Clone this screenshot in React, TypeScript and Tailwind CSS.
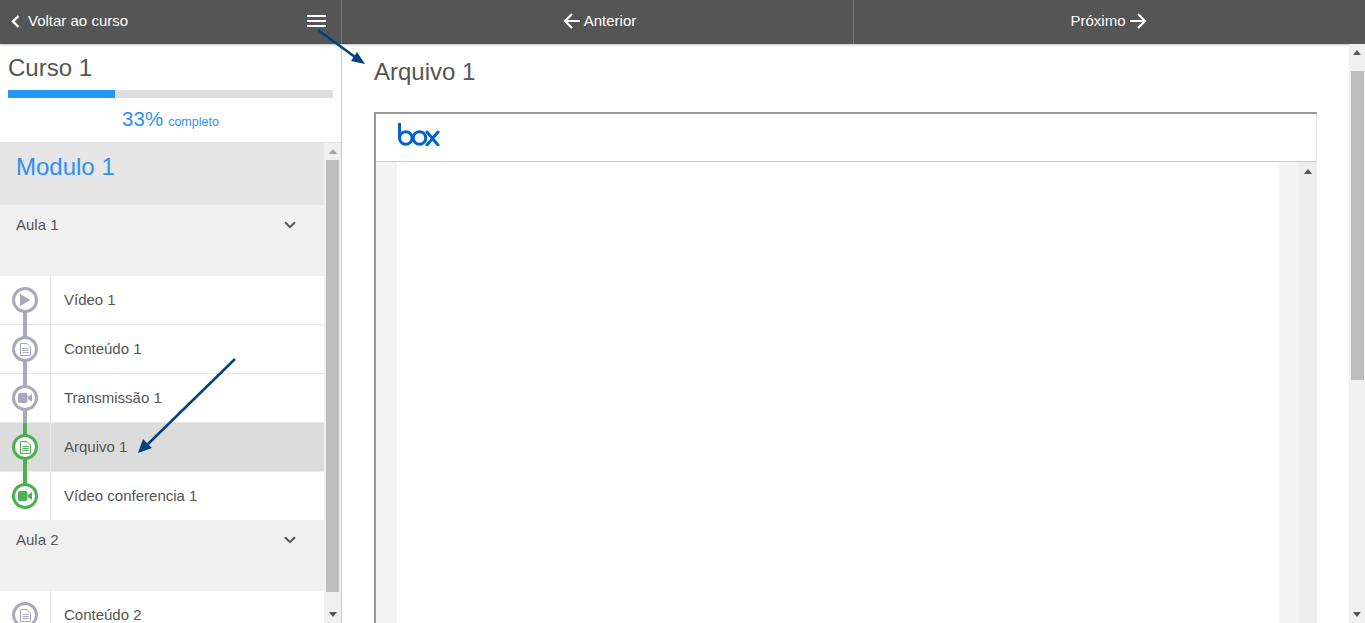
import React from "react";

const Arrow = ({ dir }: { dir: "left" | "right" }) => (
  <svg width="18" height="16" viewBox="0 0 18 16" fill="none" stroke="#fff" strokeWidth="2.2" className="shrink-0">
    {dir === "left" ? <path d="M17 8H2M9 1L2 8l7 7" /> : <path d="M1 8h15M9 1l7 7-7 7" />}
  </svg>
);

const Tri = ({ up, color = "#555" }: { up: boolean; color?: string }) => (
  <svg width="8" height="5" viewBox="0 0 8 5" fill={color}>
    {up ? <path d="M4 0l4 5H0z" /> : <path d="M0 0h8L4 5z" />}
  </svg>
);

const Chevron = () => (
  <svg width="12" height="8" viewBox="0 0 12 8" fill="none" stroke="#555" strokeWidth="2">
    <path d="M1 1.2l5 5 5-5" />
  </svg>
);

const Icon = ({ kind, color }: { kind: string; color: string }) => {
  if (kind === "play")
    return (
      <svg width="12" height="12" viewBox="0 0 12 12" fill={color}>
        <path d="M1 0l10.5 6L1 12z" />
      </svg>
    );
  if (kind === "video")
    return (
      <svg width="14" height="10" viewBox="0 0 14 10" fill={color}>
        <rect x="0" y="0" width="9.5" height="10" rx="2" />
        <path d="M10 4l4-3v8l-4-3z" />
      </svg>
    );
  return (
    <svg width="11" height="13" viewBox="0 0 11 13" fill="none" stroke={color} strokeWidth="1">
      <path d="M.5.5h6.5l3.500 3.500v8.500h-10z" />
      <path d="M2.500 5.500h6M2.500 7.500h6M2.500 9.500h6" />
    </svg>
  );
};

const GRAY = "#a9a9bd";
const GREEN = "#4caf50";

type RowProps = {
  label: string;
  kind: string;
  circle: string;
  top?: string;
  bottom?: string;
  active?: boolean;
  last?: boolean;
};

const Row = ({ label, kind, circle, top, bottom, active, last }: RowProps) => (
  <div className={`flex shrink-0 ${active ? "bg-[#dcdcdc]" : "bg-white"} ${last ? "h-[48px]" : "h-[49px] border-b border-[#e8e8e8]"}`}>
    <div className="relative flex h-full w-[51px] shrink-0 items-center justify-center border-r border-[#e8e8e8]">
      {top && <div className="absolute left-[23px] top-0 h-1/2 w-1" style={{ backgroundColor: top }} />}
      {bottom && <div className="absolute left-[23px] bottom-[-1px] h-1/2 w-1" style={{ backgroundColor: bottom }} />}
      <div
        className="relative flex h-[26px] w-[26px] items-center justify-center rounded-full border-[3px] bg-white"
        style={{ borderColor: circle }}
      >
        <Icon kind={kind} color={circle} />
      </div>
    </div>
    <div className="flex items-center pl-[13px] text-[15px] text-[#555]">{label}</div>
  </div>
);

const Aula = ({ label }: { label: string }) => (
  <div className="flex h-[71px] shrink-0 items-start justify-between bg-[#f0f0f0] pl-4 pr-[28px] pt-[9px] text-[15px] text-[#555]">
    <span>{label}</span>
    <span className="mt-[7px] flex"><Chevron /></span>
  </div>
);

export default function App() {
  return (
    <div className="relative flex h-[623px] w-[1365px] flex-col overflow-hidden bg-white font-['Liberation_Sans',Arial,sans-serif] text-[#555]">
      <header className="flex h-11 shrink-0 bg-[#555] text-white shadow-[0_1px_2px_rgba(0,0,0,0.25)]">
        <div className="flex w-[342px] shrink-0 items-center justify-between border-r border-[#777] pb-[2px] pl-[11px] pr-[15px]">
          <div className="flex items-center gap-[8px] text-[15px]">
            <svg width="9" height="13" viewBox="0 0 9 13" fill="none" stroke="#fff" strokeWidth="2.400">
              <path d="M7.500 1L2 6.500l5.500 5.500" />
            </svg>
            Voltar ao curso
          </div>
          <div className="flex w-[19px] flex-col gap-[3px]">
            <div className="h-[2px] bg-white" />
            <div className="h-[2px] bg-white" />
            <div className="h-[2px] bg-white" />
          </div>
        </div>
        <div className="flex w-[512px] shrink-0 items-center justify-center gap-[3px] border-r border-[#777] pb-[2px] pl-[4px] text-[15px]">
          <Arrow dir="left" />
          Anterior
        </div>
        <div className="flex flex-1 items-center justify-center gap-[3px] pb-[2px] pr-[2px] text-[15px]">
          Próximo
          <Arrow dir="right" />
        </div>
      </header>

      <div className="flex min-h-0 flex-1">
        <aside className="flex w-[342px] shrink-0 flex-col border-r border-[#ccc]">
          <div className="h-[99px] shrink-0 border-b border-[#e0e0e0] pl-2 pr-2">
            <div className="pt-[8px] text-[24px] leading-[32px]">Curso 1</div>
            <div className="mt-[6px] h-2 w-[325px] bg-[#ddd]">
              <div className="h-2 w-[107px] bg-[#2196f3]" />
            </div>
            <div className="mt-[7px] flex items-baseline justify-center gap-[5px] text-[#2f8ff0]">
              <span className="text-[20.500px] leading-[27px]">33%</span>
              <span className="text-[12.500px]">completo</span>
            </div>
          </div>
          <div className="flex min-h-0 flex-1">
            <div className="flex w-[324px] shrink-0 flex-col overflow-hidden">
              <div className="h-[62px] shrink-0 bg-[#e6e6e6] pl-4 pt-[8px] text-[24px] leading-[32px] text-[#2f8ff0]">Modulo 1</div>
              <Aula label="Aula 1" />
              <Row label="Vídeo 1" kind="play" circle={GRAY} bottom={GRAY} />
              <Row label="Conteúdo 1" kind="file" circle={GRAY} top={GRAY} bottom={GRAY} />
              <Row label="Transmissão 1" kind="video" circle={GRAY} top={GRAY} bottom={GRAY} />
              <Row label="Arquivo 1" kind="file" circle={GREEN} top={GREEN} bottom={GREEN} active />
              <Row label="Vídeo conferencia 1" kind="video" circle={GREEN} top={GREEN} last />
              <Aula label="Aula 2" />
              <Row label="Conteúdo 2" kind="file" circle={GRAY} />
            </div>
            <div className="flex w-[17px] shrink-0 flex-col items-center bg-[#f0f0f0]">
              <div className="flex h-[17px] items-center justify-center"><Tri up color="#a3a3a3" /></div>
              <div className="h-[432px] w-[13px] bg-[#bdbdbd]" />
              <div className="mt-auto flex h-[17px] items-center justify-center"><Tri up={false} /></div>
            </div>
          </div>
        </aside>

        <main className="flex min-w-0 flex-1">
          <div className="flex min-w-0 flex-1 flex-col pl-[32px] pr-[32px]">
            <h1 className="mt-[12px] h-[56px] shrink-0 text-[24px] font-normal leading-[32px]">Arquivo 1</h1>
            <div className="flex min-h-0 flex-1 flex-col border-l-2 border-t-2 border-[#999]">
              <div className="flex h-[48px] shrink-0 items-start border-b border-r border-b-[#ccc] border-r-[#e5e5e5] pl-[22px] pt-[9px]">
                <svg width="43" height="23" viewBox="0 0 43 23" fill="none" stroke="#0061d5" strokeWidth="3">
                  <path d="M1.500 0v15" />
                  <circle cx="7.800" cy="15" r="6.300" />
                  <circle cx="21.500" cy="15" r="6.300" />
                  <path d="M29 9l11 13M40 9L29 22" strokeLinecap="round" />
                </svg>
              </div>
              <div className="flex min-h-0 flex-1">
                <div className="w-[21px] shrink-0 bg-[#f3f3f3]" />
                <div className="flex-1 bg-white" />
                <div className="w-[20px] shrink-0 bg-[#f3f3f3]" />
                <div className="flex w-[18px] shrink-0 flex-col items-center bg-[#eee] pt-[7px]">
                  <Tri up />
                </div>
              </div>
            </div>
          </div>
          <div className="flex w-4 shrink-0 flex-col items-center bg-[#f0f0f0]">
            <div className="flex h-[27px] shrink-0 items-start justify-center pt-[6px]"><Tri up /></div>
            <div className="ml-[1px] h-[309px] w-[13px] bg-[#bdbdbd]" />
            <div className="mt-auto flex h-[17px] items-center justify-center"><Tri up={false} /></div>
          </div>
        </main>
      </div>

      <svg className="pointer-events-none absolute left-0 top-0" width="1365" height="623" fill="none">
        <path d="M318 30L355 57" stroke="#00427f" strokeWidth="2.500" />
        <path d="M365 64l-14-3 6-9z" fill="#00427f" />
        <path d="M235 359L148 444" stroke="#00427f" strokeWidth="2.500" />
        <path d="M138 453l5-14 9 9z" fill="#00427f" />
      </svg>
    </div>
  );
}
